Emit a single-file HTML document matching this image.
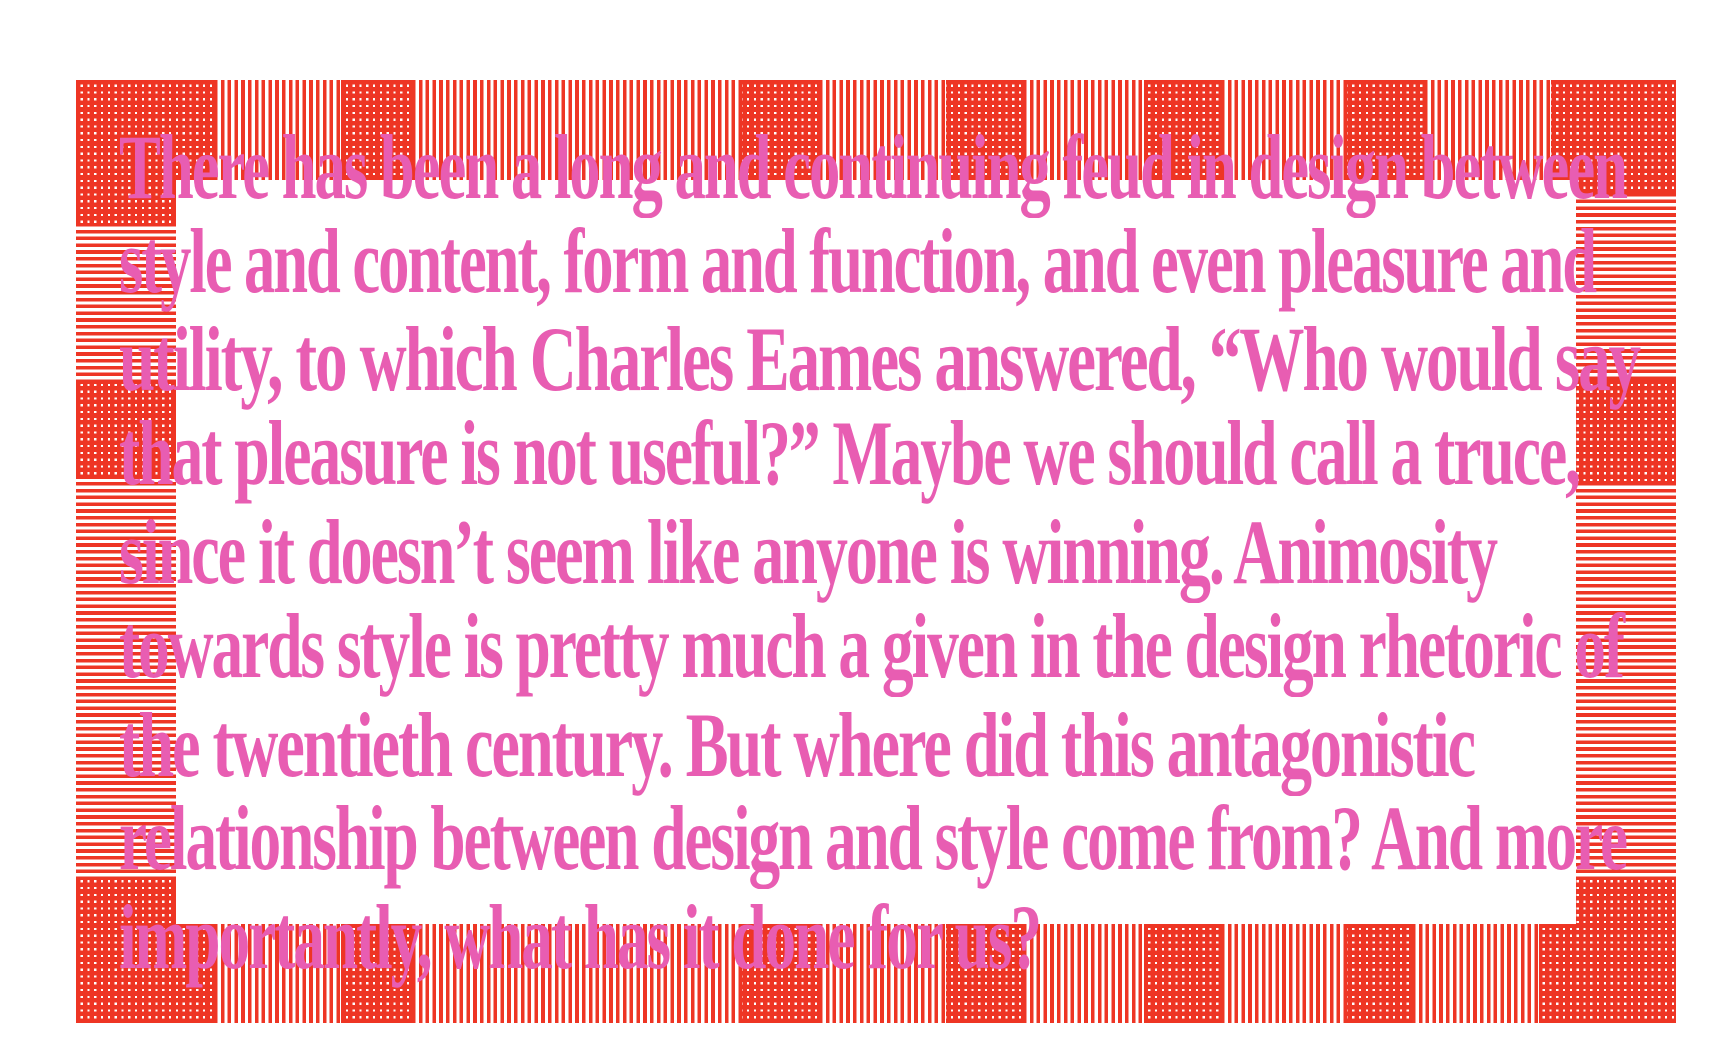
<!DOCTYPE html>
<html><head><meta charset="utf-8"><style>
html,body{margin:0;padding:0;background:#fff;width:1714px;height:1050px;overflow:hidden;position:relative}
.g{position:absolute;background:#fff;background-image:repeating-linear-gradient(90deg,#ee3524 0 4.6px,transparent 4.6px 6.8px),repeating-linear-gradient(0deg,#ee3524 0 4.6px,transparent 4.6px 6.8px)}
.v{position:absolute;background:repeating-linear-gradient(90deg,#ee3524 0 3.6px,#fff 3.6px 6.8px)}
.h{position:absolute;background:repeating-linear-gradient(0deg,#ee3524 0 3.6px,#fff 3.6px 6.8px)}
.w{position:absolute;background:#fff}
.t{position:absolute;left:119px;top:-6px;font-family:"Liberation Serif",serif;font-weight:bold;color:#e85db2;font-size:92px;white-space:nowrap;letter-spacing:-3px}
.t div{position:absolute;left:0;transform-origin:0 0;line-height:1}
</style></head><body>
<div class="g" style="left:76px;top:80px;width:1600px;height:943px"></div>
<div class="v" style="left:214px;top:80px;width:127px;height:100px"></div>
<div class="v" style="left:412px;top:80px;width:330px;height:100px"></div>
<div class="v" style="left:819px;top:80px;width:127px;height:100px"></div>
<div class="v" style="left:1023px;top:80px;width:121px;height:100px"></div>
<div class="v" style="left:1221px;top:80px;width:126px;height:100px"></div>
<div class="v" style="left:1424px;top:80px;width:127px;height:100px"></div>
<div class="v" style="left:214px;top:924px;width:127px;height:99px"></div>
<div class="v" style="left:412px;top:924px;width:330px;height:99px"></div>
<div class="v" style="left:819px;top:924px;width:127px;height:99px"></div>
<div class="v" style="left:1023px;top:924px;width:121px;height:99px"></div>
<div class="v" style="left:1221px;top:924px;width:126px;height:99px"></div>
<div class="v" style="left:1412px;top:924px;width:127px;height:99px"></div>
<div class="h" style="left:76px;top:225px;width:100px;height:158px"></div>
<div class="h" style="left:76px;top:478px;width:100px;height:402px"></div>
<div class="h" style="left:1576px;top:193px;width:100px;height:187px"></div>
<div class="h" style="left:1576px;top:484px;width:100px;height:396px"></div>
<div class="w" style="left:176px;top:180px;width:1400px;height:744px"></div>
<div class="t" id="t">
<div data-w="1507" style="top:127px">There has been a long and continuing feud in design between</div>
<div data-w="1476" style="top:221px">style and content, form and function, and even pleasure and</div>
<div data-w="1520" style="top:319px">utility, to which Charles Eames answered, “Who would say</div>
<div data-w="1460" style="top:413px">that pleasure is not useful?” Maybe we should call a truce,</div>
<div data-w="1377" style="top:512px">since it doesn’t seem like anyone is winning. Animosity</div>
<div data-w="1504" style="top:606px">towards style is pretty much a given in the design rhetoric of</div>
<div data-w="1355" style="top:705px">the twentieth century. But where did this antagonistic</div>
<div data-w="1507" style="top:798px">relationship between design and style come from? And more</div>
<div data-w="921" style="top:897px">importantly, what has it done for us?</div>
</div>
<script>
document.querySelectorAll('#t div').forEach(function(d){var w=d.getBoundingClientRect().width;var tw=+d.getAttribute('data-w');d.style.transform='scale('+(tw/w)+',1)';});
</script>
</body></html>
